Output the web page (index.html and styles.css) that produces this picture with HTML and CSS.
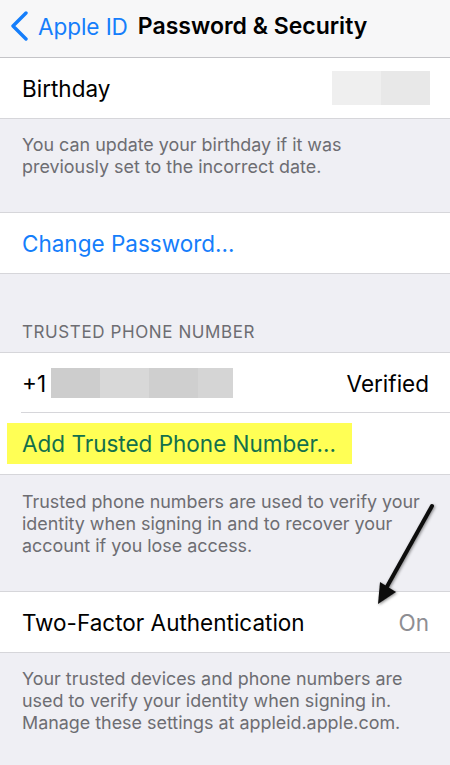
FILE: index.html
```html
<!DOCTYPE html>
<html lang="en">
<head>
<meta charset="utf-8">
<title>Password &amp; Security</title>
<link rel="stylesheet" href="styles.css">
</head>
<body>
<div class="screen">
  <header class="nav">
    <a class="back" href="#">
      <svg class="chevron" width="20" height="30" viewBox="0 0 20 30" aria-hidden="true">
        <path d="M16 2 L3 15 L16 28" fill="none" stroke="#157efb" stroke-width="3.4" stroke-linecap="round" stroke-linejoin="round"/>
      </svg>
      <span class="back-label">Apple ID</span>
    </a>
    <h1 class="title">Password &amp; Security</h1>
  </header>

  <section class="group">
    <div class="cell">
      <span class="cell-label">Birthday</span>
      <span class="redact redact-birthday"><i class="r1"></i><i class="r2"></i></span>
    </div>
  </section>
  <p class="footer footer-birthday">You can update your birthday if it was previously set to the incorrect date.</p>

  <section class="group">
    <div class="cell">
      <span class="cell-label link">Change Password...</span>
    </div>
  </section>

  <h2 class="section-header">Trusted Phone Number</h2>
  <section class="group">
    <div class="cell cell-inset">
      <span class="cell-label phone">+1 <span class="redact redact-phone"><i class="p1"></i><i class="p2"></i><i class="p3"></i><i class="p4"></i></span></span>
      <span class="cell-value dark">Verified</span>
    </div>
    <div class="cell">
      <span class="highlight"><span class="cell-label link marked">Add Trusted Phone Number...</span></span>
    </div>
  </section>
  <p class="footer footer-trusted">Trusted phone numbers are used to verify your identity when signing in and to recover your account if you lose access.</p>

  <section class="group">
    <div class="cell">
      <span class="cell-label">Two-Factor Authentication</span>
      <span class="cell-value">On</span>
    </div>
  </section>
  <p class="footer">Your trusted devices and phone numbers are used to verify your identity when signing in. Manage these settings at appleid.apple.com.</p>

  <svg class="pointer" width="80" height="120" viewBox="0 0 80 120" aria-hidden="true">
    <defs>
      <filter id="shade" x="-40%" y="-20%" width="180%" height="140%">
        <feDropShadow dx="1" dy="1" stdDeviation="1.4" flood-color="#000" flood-opacity="0.45"/>
      </filter>
    </defs>
    <g filter="url(#shade)">
      <line x1="62" y1="10" x2="14" y2="96" stroke="#111" stroke-width="4" stroke-linecap="round"/>
      <polygon points="8,108 10,86 26,96" fill="#111"/>
    </g>
  </svg>
</div>
</body>
</html>
```

FILE: styles.css
```css
* { box-sizing: border-box; }

html, body {
  margin: 0;
  padding: 0;
}

body {
  background: #efeff4;
  font-family: Inter, "Noto Sans", "Liberation Sans", sans-serif;
  -webkit-font-smoothing: antialiased;
}

.screen {
  position: relative;
  width: 450px;
  min-height: 765px;
  overflow: hidden;
}

/* navigation bar */
.nav {
  height: 58px;
  background: #f7f7f8;
  border-bottom: 1px solid #c4c4c8;
  display: flex;
  align-items: center;
  padding: 0 0 5px 10px;
  gap: 10px;
}

.back {
  display: flex;
  align-items: center;
  gap: 8px;
  text-decoration: none;
  color: #157efb;
}

.back-label {
  font-size: 22.6px;
  letter-spacing: -0.1px;
}

.title {
  margin: 0;
  font-size: 23px;
  font-weight: 600;
  color: #000;
  letter-spacing: 0;
  white-space: nowrap;
}

/* grouped table */
.group {
  background: #fff;
  border-top: 1px solid #d6d6da;
  border-bottom: 1px solid #d6d6da;
}

.nav + .group { border-top: none; }

.cell {
  height: 60px;
  display: flex;
  align-items: center;
  justify-content: space-between;
  padding: 0 21px 0 22px;
}

.cell-inset {
  position: relative;
}

.cell-inset::after {
  content: "";
  position: absolute;
  left: 21px;
  right: 0;
  bottom: 0;
  height: 1px;
  background: #d6d6da;
}

.cell + .cell { height: 61px; }

.cell-label {
  font-size: 22.5px;
  color: #000;
  letter-spacing: 0;
  white-space: nowrap;
}

.link { color: #157efb; }

.cell-value {
  font-size: 22.5px;
  color: #8e8e93;
}

.cell-value.dark { color: #000; }

.phone {
  display: flex;
  align-items: center;
  gap: 5px;
}

/* blurred-out personal data */
.redact {
  display: flex;
}

.redact i { display: block; }

.redact-birthday { height: 34px; margin-right: -1px; }
.redact-birthday .r1 { width: 49px; background: #efefef; }
.redact-birthday .r2 { width: 49px; background: #e8e8e8; }

.redact-phone { height: 30px; }
.redact-phone .p1 { width: 49px; background: #cdcdcd; }
.redact-phone .p2 { width: 49px; background: #d8d8d8; }
.redact-phone .p3 { width: 49px; background: #cfcfcf; }
.redact-phone .p4 { width: 35px; background: #d5d5d5; }

/* marker highlight */
.highlight {
  display: flex;
  align-items: center;
  height: 41px;
  margin-left: -15px;
  padding: 0 15px;
  width: 345px;
  background: #ffff55;
}

.marked { color: #12704c; }

/* section header and footers */
.section-header {
  margin: 0;
  padding: 48px 22px 10px;
  font-size: 17px;
  line-height: 20px;
  font-weight: 400;
  text-transform: uppercase;
  color: #6d6d72;
  letter-spacing: 0.6px;
}

.footer {
  margin: 0;
  padding: 15px 24px 35px 22px;
  font-size: 17.9px;
  line-height: 22px;
  color: #6d6d72;
}

.footer-birthday { padding-bottom: 34px; }
.footer-trusted { padding-top: 16px; padding-bottom: 34px; }

/* annotation arrow drawn over the list */
.pointer {
  position: absolute;
  left: 370px;
  top: 496px;
}
```
